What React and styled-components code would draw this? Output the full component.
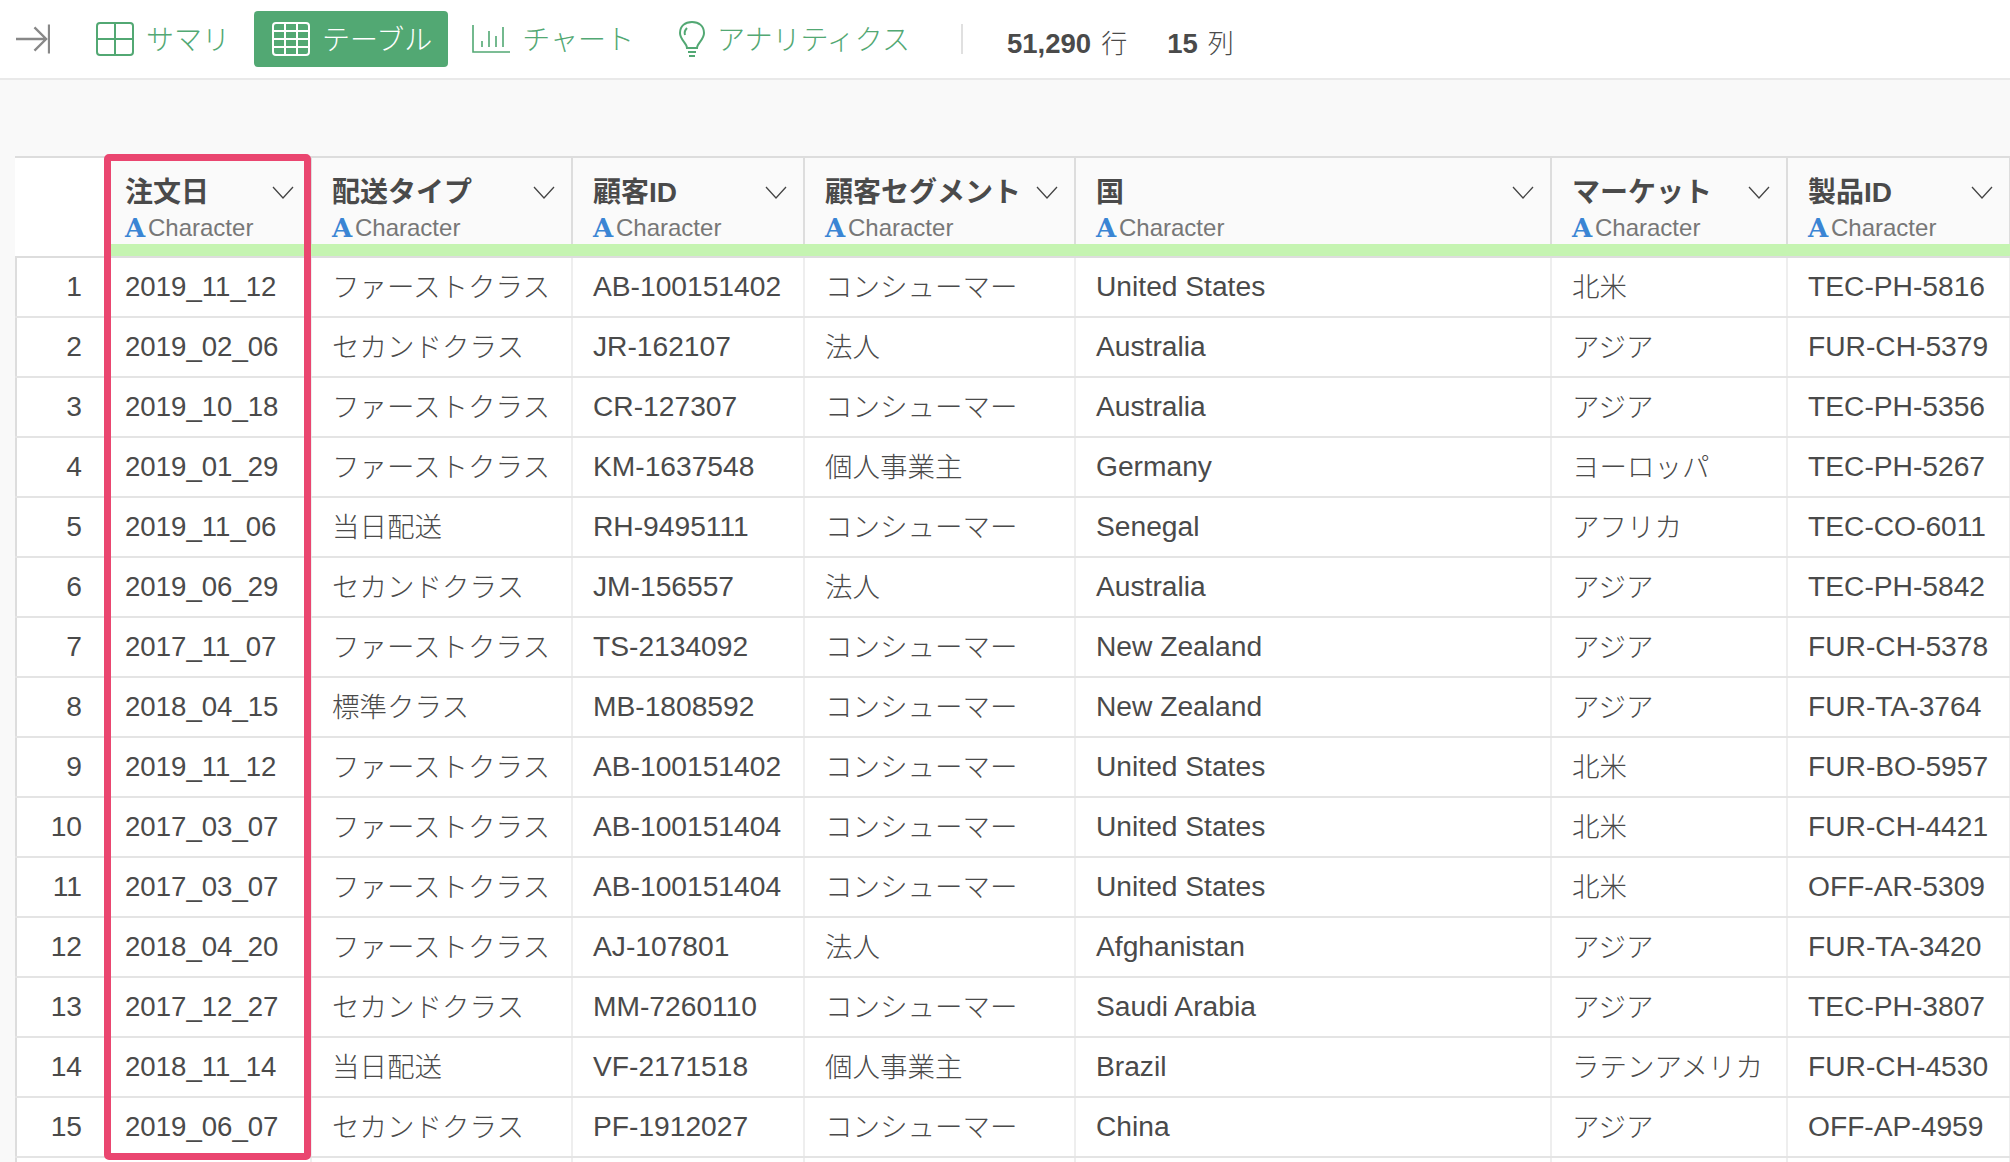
import styled, { createGlobalStyle } from 'styled-components'

const GlobalStyle = createGlobalStyle`
  html, body {
    margin: 0;
    padding: 0;
    background: #f9f9f9;
    overflow: hidden;
  }
  body {
    font-family: "Liberation Sans", "Noto Sans CJK JP", sans-serif;
    color: #4a4a4a;
  }
`

const GREEN = '#52a873'
const COLUMNS = '90px 207px 261px 232px 271px 476px 236px 223px'

const Page = styled.div`
  width: 2010px;
  height: 1162px;
  overflow: hidden;
`

const Toolbar = styled.div`
  display: flex;
  align-items: center;
  height: 78px;
  padding-left: 16px;
  background: #fff;
  border-bottom: 2px solid #e9e9e9;
`

const CollapseButton = styled.div`
  display: flex;
  width: 34px;
  margin-right: 46px;
`

const Tab = styled.div`
  display: flex;
  align-items: center;
  gap: 12px;
  height: 56px;
  padding: 0 ${(p) => (p.$active ? 16 : 0)}px 3px ${(p) => (p.$active ? 18 : 0)}px;
  box-sizing: border-box;
  border-radius: 4px;
  font-size: 28px;
  font-weight: 300;
  white-space: nowrap;
  color: ${(p) => (p.$active ? '#fff' : GREEN)};
  background: ${(p) => (p.$active ? GREEN : 'transparent')};
  margin-right: ${(p) => p.$mr || 0}px;

  svg {
    margin-top: 3px;
  }
`

const Divider = styled.div`
  width: 2px;
  height: 30px;
  margin: 0 44px 0 51px;
  background: #e0e0e0;
`

const Stat = styled.div`
  display: flex;
  align-items: baseline;
  gap: 10px;
  margin-right: 40px;
  padding-top: 4px;
  font-size: 26px;
  font-weight: 300;
  color: #4a4a4a;

  b {
    font-size: 27.5px;
    font-weight: 700;
  }
`

const TableArea = styled.div`
  position: relative;
  margin: 76px 0 0 15px;
  border-top: 2px solid #ddd;
  border-left: 2px solid #ddd;
  background: #fff;
`

const HeadRow = styled.div`
  display: grid;
  grid-template-columns: ${COLUMNS};
  margin-left: -2px;
  height: 100px;
  box-sizing: border-box;
  border-bottom: 2px solid #ddd;
  background: #fafafa;
`

const Row = styled.div`
  display: grid;
  grid-template-columns: ${COLUMNS};
  margin-left: -2px;
  height: 60px;
  box-sizing: border-box;
  border-bottom: 2px solid #e4e4e4;
`

const HeadCell = styled.div`
  position: relative;
  display: flex;
  flex-direction: column;
  box-sizing: border-box;
  padding-top: 14px;
  border-right: 2px solid #ddd;
`

const GutterHead = styled.div`
  background: #fff;
`

const HeadLabel = styled.div`
  display: flex;
  align-items: center;
  justify-content: space-between;
  height: 36px;
  padding: 0 16px 0 20px;
  margin-bottom: 4px;
  font-size: 28px;
  font-weight: 700;
  white-space: nowrap;
  color: #4a4a4a;

  svg {
    margin-top: 4px;
  }
`

const TypeLabel = styled.div`
  display: flex;
  align-items: center;
  height: 32px;
  padding-left: 20px;
  font-size: 24px;
  color: #777;
`

const TypeMark = styled.span`
  width: 23px;
  font-size: 26px;
  font-weight: 700;
  font-family: "DejaVu Serif", serif;
  color: #3a85d4;
`

const QualityBar = styled.div`
  position: absolute;
  left: 0;
  right: -2px;
  bottom: 0;
  height: 12px;
  background: #c5f4b1;
`

const Cell = styled.div`
  display: flex;
  align-items: center;
  box-sizing: border-box;
  padding: 0 0 ${(p) => (p.$jp ? 5 : 1)}px 20px;
  border-right: 2px solid #eee;
  font-size: ${(p) => (p.$jp ? 27.5 : 28.2)}px;
  font-weight: 300;
  white-space: nowrap;
  color: #4a4a4a;
`

const DateCell = styled(Cell)`
  font-size: 27.6px;
`

const NumCell = styled(Cell)`
  justify-content: flex-end;
  padding: 0 23px 1px 0;
  border-right: none;
`

const Highlight = styled.div`
  position: absolute;
  left: 87px;
  top: -4px;
  width: 207px;
  height: 1006px;
  box-sizing: border-box;
  border: 7px solid #ea4670;
  border-radius: 5px;
`

const Chevron = () => (
  <svg width="22" height="13" viewBox="0 0 22 13" fill="none" stroke="#444" strokeWidth="1.3">
    <path d="M1 1l10 11L21 1" />
  </svg>
)

const CollapseIcon = () => (
  <svg width="35" height="30" viewBox="0 0 35 30" fill="none" stroke="#888" strokeWidth="2.4">
    <path d="M0 15h31M19 3l12 12-12 12M34 0v30" />
  </svg>
)

const SummaryIcon = ({ color }) => (
  <svg width="38" height="34" viewBox="0 0 38 34" fill="none" stroke={color} strokeWidth="2">
    <rect x="1" y="1" width="36" height="32" rx="3" />
    <path d="M19 1v32M1 17h36" />
  </svg>
)

const TableIcon = ({ color }) => (
  <svg width="38" height="34" viewBox="0 0 38 34" fill="none" stroke={color} strokeWidth="2">
    <rect x="1" y="1" width="36" height="32" rx="3" />
    <path d="M1 9h36M1 17h36M1 25h36M13 1v32M25 1v32" />
  </svg>
)

const ChartIcon = ({ color }) => (
  <svg width="38" height="28" viewBox="0 0 38 28" fill="none" stroke={color} strokeWidth="1.6">
    <path d="M1 0v27h37M10 16v6M17 6v16M24 11v11M31 2v20" />
  </svg>
)

const BulbIcon = ({ color }) => (
  <svg width="26" height="37" viewBox="0 0 26 37" fill="none" stroke={color} strokeWidth="2">
    <path d="M8 27c0-5-7-8-7-15C1 5 6 1 13 1s12 4 12 11c0 7-7 10-7 15z" />
    <path d="M8 7c-2 2-3 4-2 7M9 31h8M10 35h6" />
  </svg>
)

const HEADERS = ['注文日', '配送タイプ', '顧客ID', '顧客セグメント', '国', 'マーケット', '製品ID']

const ROWS = [
  ['2019_11_12', 'ファーストクラス', 'AB-100151402', 'コンシューマー', 'United States', '北米', 'TEC-PH-5816'],
  ['2019_02_06', 'セカンドクラス', 'JR-162107', '法人', 'Australia', 'アジア', 'FUR-CH-5379'],
  ['2019_10_18', 'ファーストクラス', 'CR-127307', 'コンシューマー', 'Australia', 'アジア', 'TEC-PH-5356'],
  ['2019_01_29', 'ファーストクラス', 'KM-1637548', '個人事業主', 'Germany', 'ヨーロッパ', 'TEC-PH-5267'],
  ['2019_11_06', '当日配送', 'RH-9495111', 'コンシューマー', 'Senegal', 'アフリカ', 'TEC-CO-6011'],
  ['2019_06_29', 'セカンドクラス', 'JM-156557', '法人', 'Australia', 'アジア', 'TEC-PH-5842'],
  ['2017_11_07', 'ファーストクラス', 'TS-2134092', 'コンシューマー', 'New Zealand', 'アジア', 'FUR-CH-5378'],
  ['2018_04_15', '標準クラス', 'MB-1808592', 'コンシューマー', 'New Zealand', 'アジア', 'FUR-TA-3764'],
  ['2019_11_12', 'ファーストクラス', 'AB-100151402', 'コンシューマー', 'United States', '北米', 'FUR-BO-5957'],
  ['2017_03_07', 'ファーストクラス', 'AB-100151404', 'コンシューマー', 'United States', '北米', 'FUR-CH-4421'],
  ['2017_03_07', 'ファーストクラス', 'AB-100151404', 'コンシューマー', 'United States', '北米', 'OFF-AR-5309'],
  ['2018_04_20', 'ファーストクラス', 'AJ-107801', '法人', 'Afghanistan', 'アジア', 'FUR-TA-3420'],
  ['2017_12_27', 'セカンドクラス', 'MM-7260110', 'コンシューマー', 'Saudi Arabia', 'アジア', 'TEC-PH-3807'],
  ['2018_11_14', '当日配送', 'VF-2171518', '個人事業主', 'Brazil', 'ラテンアメリカ', 'FUR-CH-4530'],
  ['2019_06_07', 'セカンドクラス', 'PF-1912027', 'コンシューマー', 'China', 'アジア', 'OFF-AP-4959'],
]

// the first row past the fold, only a sliver of it shows
const EMPTY_ROW = ['', '', '', '', '', '', '']

const isJapanese = (value) => /[^\x00-\x7f]/.test(value)

export default function App() {
  return (
    <Page>
      <GlobalStyle />
      <Toolbar>
        <CollapseButton>
          <CollapseIcon />
        </CollapseButton>
        <Tab $mr={24}>
          <SummaryIcon color={GREEN} />
          サマリ
        </Tab>
        <Tab $active $mr={24}>
          <TableIcon color="#fff" />
          テーブル
        </Tab>
        <Tab $mr={45}>
          <ChartIcon color={GREEN} />
          チャート
        </Tab>
        <Tab>
          <BulbIcon color={GREEN} />
          アナリティクス
        </Tab>
        <Divider />
        <Stat>
          <b>51,290</b> 行
        </Stat>
        <Stat>
          <b>15</b> 列
        </Stat>
      </Toolbar>

      <TableArea>
        <HeadRow>
          <GutterHead />
          {HEADERS.map((title) => (
            <HeadCell key={title}>
              <HeadLabel>
                {title}
                <Chevron />
              </HeadLabel>
              <TypeLabel>
                <TypeMark>A</TypeMark>
                Character
              </TypeLabel>
              <QualityBar />
            </HeadCell>
          ))}
        </HeadRow>
        {ROWS.map(([date, ...rest], i) => (
          <Row key={i}>
            <NumCell>{i + 1}</NumCell>
            <DateCell>{date}</DateCell>
            {rest.map((value, j) => (
              <Cell key={j} $jp={isJapanese(value)}>
                {value}
              </Cell>
            ))}
          </Row>
        ))}
        <Row>
          <NumCell />
          {EMPTY_ROW.map((value, j) => (
            <Cell key={j}>{value}</Cell>
          ))}
        </Row>
        <Highlight />
      </TableArea>
    </Page>
  )
}
